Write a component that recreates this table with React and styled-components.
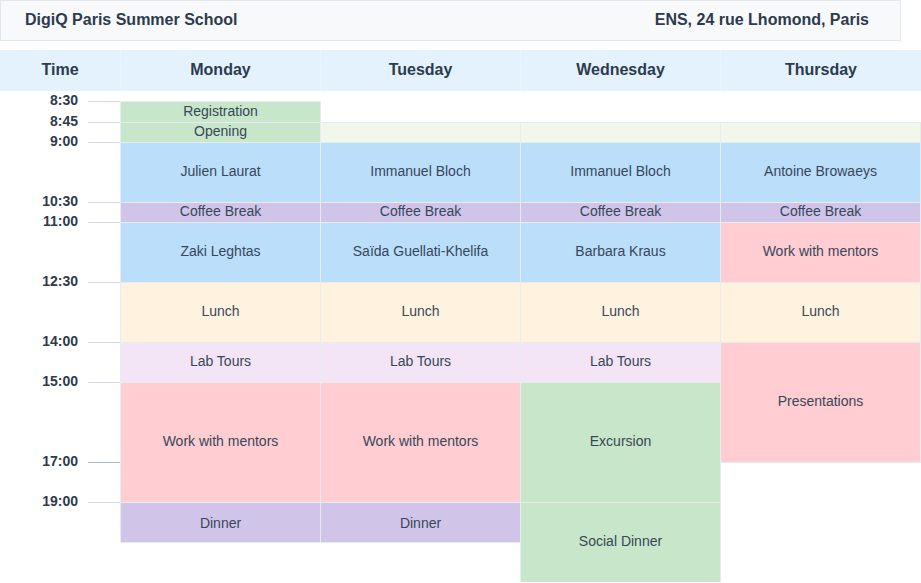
import React from "react";
import styled, { createGlobalStyle } from "styled-components";

const GlobalStyle = createGlobalStyle`
  html, body { margin: 0; padding: 0; background: #ffffff; }
  body { font-family: "Liberation Sans", Arial, sans-serif; }
  * { box-sizing: border-box; }
`;

const COLORS = {
  green: "#c8e6c9",
  paleGreen: "#f1f8e9",
  blue: "#bbdefb",
  purple: "#d1c4e9",
  peach: "#fff3e0",
  lilac: "#f3e5f5",
  pink: "#ffcdd2",
};

const COLS = "120px 200px 200px 200px 201px";

const Page = styled.div`
  width: 921px;
`;

const TopBar = styled.header`
  width: 901px;
  height: 41px;
  display: flex;
  align-items: center;
  justify-content: space-between;
  padding: 0 31px 2px 24px;
  background: #f7f9fb;
  border: 1px solid #e3e7eb;
  color: #2d3b4d;
  font-size: 16px;
  font-weight: bold;
`;

const HeaderRow = styled.div`
  margin-top: 9px;
  display: grid;
  grid-template-columns: ${COLS};
  height: 41px;
  background: #e3f2fd;
`;

const HeaderCell = styled.div`
  display: flex;
  align-items: center;
  justify-content: center;
  padding-bottom: 2px;
  font-size: 16px;
  font-weight: bold;
  color: #2d3b4d;
  border-left: ${(p) => (p.$first ? "none" : "1px solid #edf5fc")};
`;

const Body = styled.div`
  padding-top: 10px;
  display: grid;
  grid-template-columns: 120px 200px 200px 200px 200px;
  grid-template-rows: 21px 20px 60px 20px 60px 60px 40px 80px 40px 40px 40px;
`;

const TimeSlot = styled.div`
  grid-column: 1;
  grid-row: ${(p) => p.$row};
  display: flex;
  justify-content: flex-end;
  align-items: flex-start;
  gap: 10px;
`;

const TimeLabel = styled.span`
  margin-top: -9px;
  font-size: 14px;
  line-height: 16px;
  font-weight: bold;
  color: #2d3b4d;
`;

const Tick = styled.div`
  width: 32px;
  border-top: 1px solid ${(p) => (p.$dark ? "#a9bac5" : "#d3dce2")};
`;

const Event = styled.div`
  grid-column: ${(p) => p.$col};
  grid-row: ${(p) => p.$row} / span ${(p) => p.$span || 1};
  margin: 0 -1px -1px 0;
  display: flex;
  align-items: center;
  justify-content: center;
  padding-bottom: ${(p) => (p.$low ? "0" : "3px")};
  background: ${(p) => COLORS[p.$tone]};
  border: 1px solid #e8ecef;
  font-size: 14px;
  line-height: 16px;
  color: #37475a;
`;

const times = [
  ["8:30", 1],
  ["8:45", 2],
  ["9:00", 3],
  ["10:30", 4],
  ["11:00", 5],
  ["12:30", 6],
  ["14:00", 7],
  ["15:00", 8],
  ["17:00", 9, true],
  ["19:00", 10],
];

const events = [
  // Monday
  { col: 2, row: 1, tone: "green", text: "Registration" },
  { col: 2, row: 2, tone: "green", text: "Opening" },
  { col: 2, row: 3, tone: "blue", text: "Julien Laurat" },
  { col: 2, row: 4, tone: "purple", text: "Coffee Break" },
  { col: 2, row: 5, tone: "blue", text: "Zaki Leghtas" },
  { col: 2, row: 6, tone: "peach", text: "Lunch" },
  { col: 2, row: 7, tone: "lilac", text: "Lab Tours" },
  { col: 2, row: 8, span: 2, tone: "pink", text: "Work with mentors" },
  { col: 2, row: 10, tone: "purple", text: "Dinner", low: true },
  // Tuesday
  { col: 3, row: 2, tone: "paleGreen", text: "" },
  { col: 3, row: 3, tone: "blue", text: "Immanuel Bloch" },
  { col: 3, row: 4, tone: "purple", text: "Coffee Break" },
  { col: 3, row: 5, tone: "blue", text: "Saïda Guellati-Khelifa" },
  { col: 3, row: 6, tone: "peach", text: "Lunch" },
  { col: 3, row: 7, tone: "lilac", text: "Lab Tours" },
  { col: 3, row: 8, span: 2, tone: "pink", text: "Work with mentors" },
  { col: 3, row: 10, tone: "purple", text: "Dinner", low: true },
  // Wednesday
  { col: 4, row: 2, tone: "paleGreen", text: "" },
  { col: 4, row: 3, tone: "blue", text: "Immanuel Bloch" },
  { col: 4, row: 4, tone: "purple", text: "Coffee Break" },
  { col: 4, row: 5, tone: "blue", text: "Barbara Kraus" },
  { col: 4, row: 6, tone: "peach", text: "Lunch" },
  { col: 4, row: 7, tone: "lilac", text: "Lab Tours" },
  { col: 4, row: 8, span: 2, tone: "green", text: "Excursion" },
  { col: 4, row: 10, span: 2, tone: "green", text: "Social Dinner" },
  // Thursday
  { col: 5, row: 2, tone: "paleGreen", text: "" },
  { col: 5, row: 3, tone: "blue", text: "Antoine Browaeys" },
  { col: 5, row: 4, tone: "purple", text: "Coffee Break" },
  { col: 5, row: 5, tone: "pink", text: "Work with mentors" },
  { col: 5, row: 6, tone: "peach", text: "Lunch" },
  { col: 5, row: 7, span: 2, tone: "pink", text: "Presentations" },
];

const days = ["Time", "Monday", "Tuesday", "Wednesday", "Thursday"];

export default function App() {
  return (
    <Page>
      <GlobalStyle />
      <TopBar>
        <span>DigiQ Paris Summer School</span>
        <span>ENS, 24 rue Lhomond, Paris</span>
      </TopBar>
      <HeaderRow>
        {days.map((d, i) => (
          <HeaderCell key={d} $first={i === 0}>
            {d}
          </HeaderCell>
        ))}
      </HeaderRow>
      <Body>
        {times.map(([t, row, dark]) => (
          <TimeSlot key={t} $row={row}>
            <TimeLabel>{t}</TimeLabel>
            <Tick $dark={dark} />
          </TimeSlot>
        ))}
        {events.map((e, i) => (
          <Event
            key={i}
            $col={e.col}
            $row={e.row}
            $span={e.span}
            $tone={e.tone}
            $low={e.low}
          >
            {e.text}
          </Event>
        ))}
      </Body>
    </Page>
  );
}
